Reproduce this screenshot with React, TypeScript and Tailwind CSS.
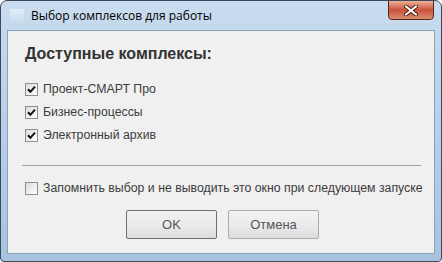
import React from "react";

function CheckBox({ checked }: { checked: boolean }) {
  return (
    <span className="w-[13px] h-[13px] shrink-0 border border-[#8f8f8f] bg-gradient-to-br from-[#dcdcdc] to-white flex items-center justify-center">
      {checked && (
        <svg width="9" height="9" viewBox="0 0 9 9">
          <path d="M1 4.2 L3.4 6.8 L8 1.6" fill="none" stroke="#111" strokeWidth="2" />
        </svg>
      )}
    </span>
  );
}

function Row({ label, checked }: { label: string; checked: boolean }) {
  return (
    <label className="h-[23px] flex items-center gap-[5px] whitespace-nowrap">
      <CheckBox checked={checked} />
      <span>{label}</span>
    </label>
  );
}

export default function App() {
  const items = ["Проект-СМАРТ Про", "Бизнес-процессы", "Электронный архив"];

  return (
    <div className="w-[442px] h-[262px] flex flex-col rounded-t-[7px] rounded-b-[4px] border border-[#3d4a59] bg-gradient-to-b from-[#c9dcef] via-[#b7cfe8] to-[#a8c3e0] overflow-hidden">
      {/* Title bar */}
      <div className="h-[29px] flex pl-[9px] pr-[7px] shrink-0">
        <div className="w-[14px] h-[14px] mt-[8px] rounded-[2px] bg-gradient-to-b from-[#eaf3fb] to-[#c6dbef] opacity-80" />
        <div
          className="ml-[7px] mt-[6px] text-[12px] text-black"
          style={{ fontFamily: '"Open Sans", "Noto Sans", sans-serif' }}
        >
          Выбор комплексов для работы
        </div>
        <div className="ml-auto -mt-px w-[46px] h-[20px] rounded-b-[4px] border border-[#5e2619] bg-gradient-to-b from-[#eab09a] via-[#c9523a] to-[#d88d6f] flex items-center justify-center">
          <svg width="14" height="11" viewBox="0 0 14 11">
            <path
              d="M2 1.5 L12 9.5 M12 1.5 L2 9.5"
              stroke="#4a1a12"
              strokeWidth="4"
              strokeLinecap="round"
            />
            <path
              d="M2 1.5 L12 9.5 M12 1.5 L2 9.5"
              stroke="#fff"
              strokeWidth="2.2"
              strokeLinecap="round"
            />
          </svg>
        </div>
      </div>

      {/* Client area */}
      <div
        className="mx-[6px] mb-[7px] flex-1 border border-[#8aa2bc] bg-[#f0f0f0] pl-[17px] pr-[13px] flex flex-col text-[#3c3c3c]"
        style={{ fontFamily: '"Liberation Sans", Arial, sans-serif' }}
      >
        <div className="mt-[13px] h-[20px] leading-[20px] text-[16px] font-bold text-[#333]">
          Доступные комплексы:
        </div>

        <div className="mt-[14px] flex flex-col text-[12.3px]">
          {items.map((it) => (
            <Row key={it} label={it} checked />
          ))}
        </div>

        <div className="mt-[18px] -ml-[3px] h-px bg-[#a0a0a0]" />

        <div className="mt-[11px] text-[12.3px]">
          <Row label="Запомнить выбор и не выводить это окно при следующем запуске" checked={false} />
        </div>

        <div className="mt-[10px] ml-[101px] flex gap-[11px] text-[13px] text-[#555]">
          <button className="w-[91px] h-[29px] rounded-[2px] border border-[#707070] bg-gradient-to-b from-[#f2f2f2] via-[#ebebeb] to-[#dddddd]">
            OK
          </button>
          <button className="w-[91px] h-[29px] rounded-[2px] border border-[#acacac] bg-gradient-to-b from-[#f2f2f2] via-[#ebebeb] to-[#dddddd]">
            Отмена
          </button>
        </div>
      </div>
    </div>
  );
}
